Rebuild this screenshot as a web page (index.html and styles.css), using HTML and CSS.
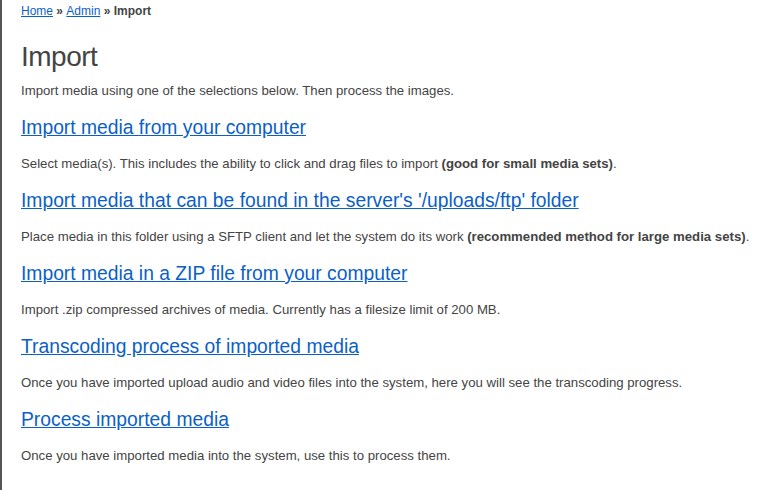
FILE: index.html
```html
<!DOCTYPE html>
<html>
<head>
<meta charset="utf-8">
<link rel="stylesheet" href="styles.css">
</head>
<body>
<div class="page">
  <div class="crumbs"><a href="#">Home</a> » <a href="#">Admin</a> » Import</div>
  <h1>Import</h1>
  <p class="intro">Import media using one of the selections below. Then process the images.</p>
  <div class="item">
    <h2><a href="#">Import media from your computer</a></h2>
    <p>Select media(s). This includes the ability to click and drag files to import <b>(good for small media sets)</b>.</p>
  </div>
  <div class="item">
    <h2><a href="#">Import media that can be found in the server's '/uploads/ftp' folder</a></h2>
    <p>Place media in this folder using a SFTP client and let the system do its work <b>(recommended method for large media sets)</b>.</p>
  </div>
  <div class="item">
    <h2><a href="#">Import media in a ZIP file from your computer</a></h2>
    <p>Import .zip compressed archives of media. Currently has a filesize limit of 200 MB.</p>
  </div>
  <div class="item">
    <h2><a href="#">Transcoding process of imported media</a></h2>
    <p>Once you have imported upload audio and video files into the system, here you will see the transcoding progress.</p>
  </div>
  <div class="item">
    <h2><a href="#">Process imported media</a></h2>
    <p>Once you have imported media into the system, use this to process them.</p>
  </div>
</div>
</body>
</html>
```
FILE: styles.css
```css
html, body {
  margin: 0;
  padding: 0;
  background: #fff;
}
body {
  font-family: "Liberation Sans", Arial, Helvetica, sans-serif;
  color: #444;
  border-left: 2px solid #555;
  min-height: 490px;
  box-sizing: border-box;
}
.page {
  padding: 4px 10px 0 19px;
}
a {
  color: #0b5fc7;
  text-decoration: underline;
}
.crumbs {
  font-size: 12px;
  font-weight: bold;
  line-height: 15px;
  color: #444;
}
.crumbs a {
  font-weight: normal;
}
h1 {
  font-size: 28px;
  letter-spacing: -0.5px;
  font-weight: normal;
  color: #444;
  margin: 21px 0 0 0;
  line-height: 34px;
}
p {
  font-size: 13.2px;
  line-height: 16px;
  margin: 0;
}
.intro {
  margin-top: 9px;
}
.item h2 {
  font-size: 19.3px;
  font-weight: normal;
  line-height: 24px;
  margin: 17px 0 0 0;
}
.item p {
  margin-top: 16px;
}
b {
  font-weight: bold;
}
```
